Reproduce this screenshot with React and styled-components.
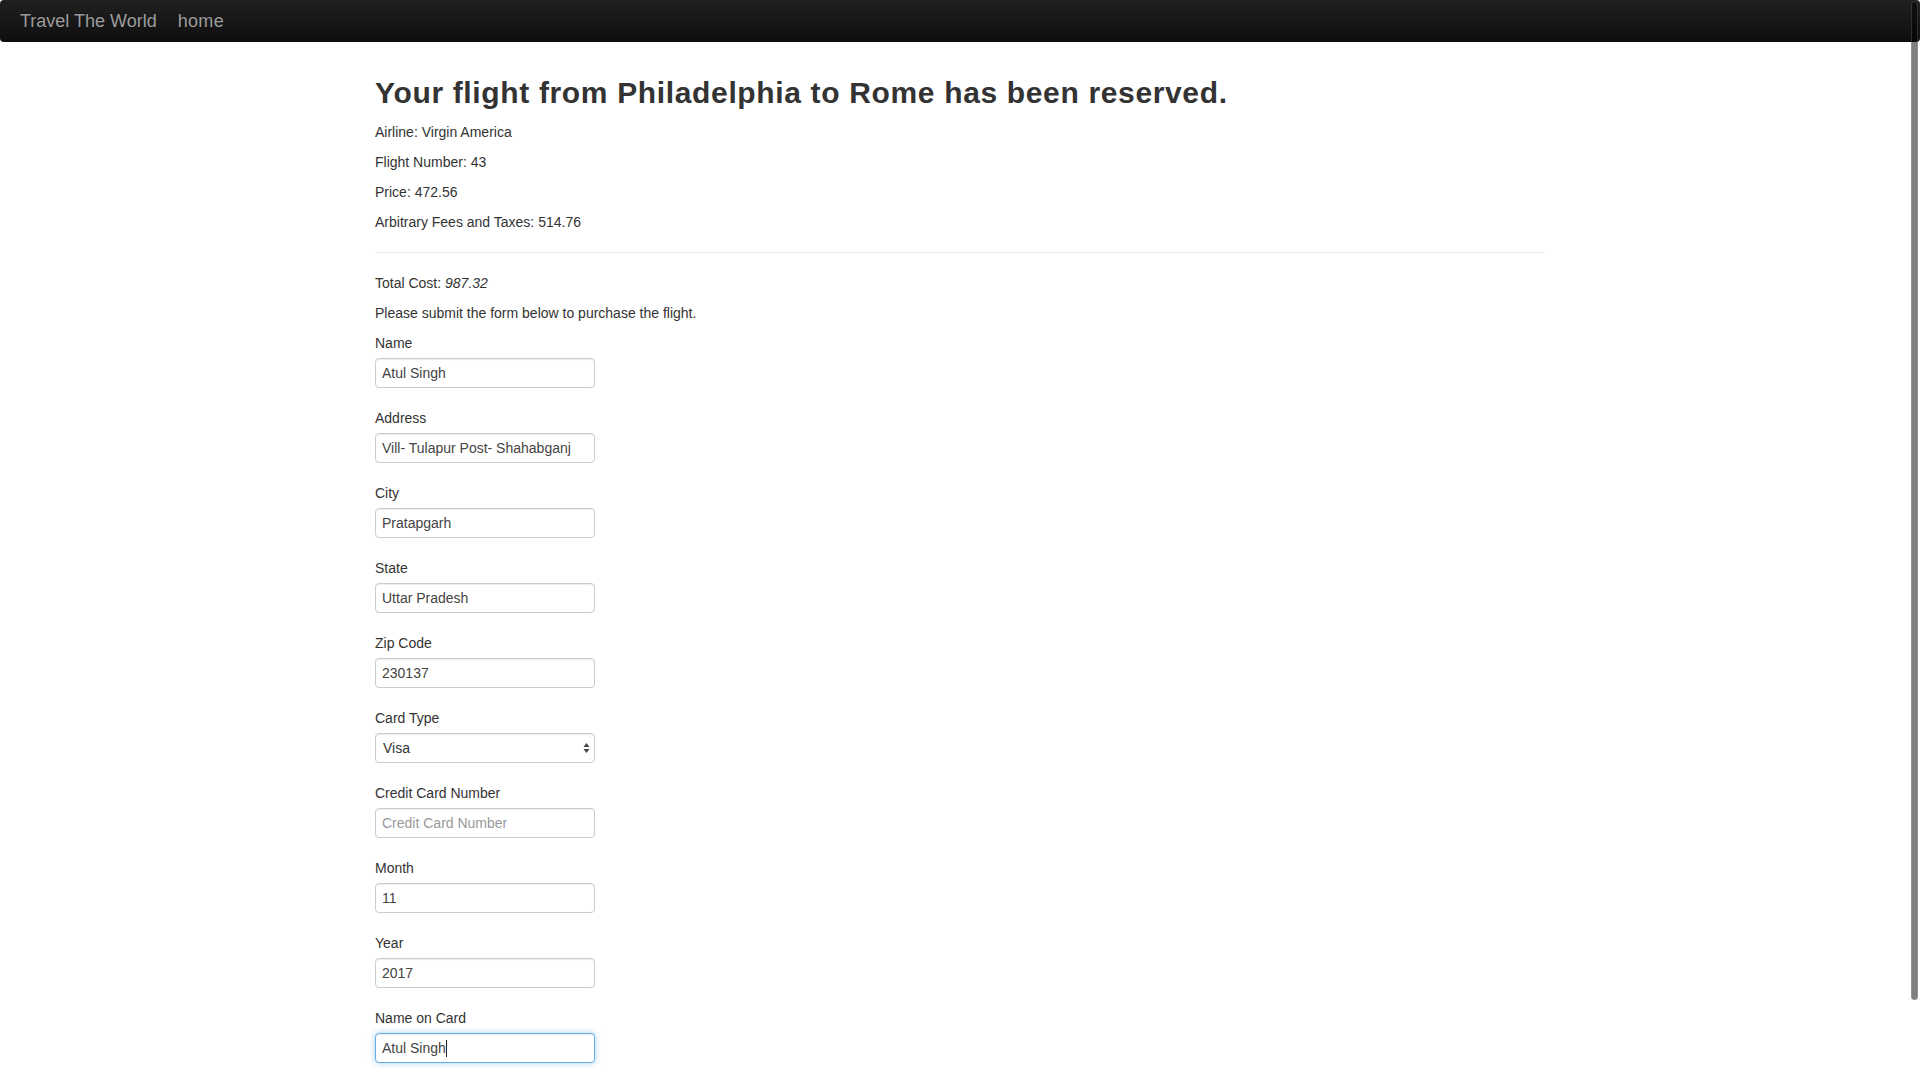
import React from "react";
import styled, { createGlobalStyle, css } from "styled-components";

const GlobalStyle = createGlobalStyle`
    html {
        scrollbar-width: none;
    }
    html::-webkit-scrollbar {
        display: none;
    }
    body {
        margin: 0;
        font-family: "Liberation Sans", Arial, sans-serif;
        font-size: 14px;
        line-height: 20px;
        color: #333;
        background: #fff;
    }
    * {
        box-sizing: border-box;
    }
`;

const Navbar = styled.nav`
    display: flex;
    align-items: center;
    gap: 21px;
    height: 42px;
    padding: 0 20px;
    background: linear-gradient(to bottom, #202020 0, #0e0e0e 100%);
    border-radius: 4px;
`;

const NavLink = styled.a`
    font-size: 18px;
    line-height: 20px;
    color: #9d9d9d;
    text-decoration: none;
    text-shadow: 0 -1px 0 rgba(0, 0, 0, 0.25);
    padding-bottom: 1px;
    letter-spacing: ${(p) => (p.$spaced ? "0.3px" : "0")};
`;

const Container = styled.main`
    width: 1170px;
    margin: 0 auto;
    padding-bottom: 80px;
`;

const Title = styled.h2`
    margin: 34px 0 13px;
    font-size: 30px;
    line-height: 33px;
    font-weight: 700;
    letter-spacing: 0.65px;
    color: #333;
`;

const Detail = styled.p`
    margin: 0 0 10px;
`;

const Divider = styled.hr`
    margin: 20px 0;
    border: 0;
    border-top: 1px solid #eee;
`;

const FieldGroup = styled.div`
    margin-bottom: 20px;
`;

const Label = styled.label`
    display: block;
    margin-bottom: 5px;
    font-weight: 400;
`;

const fieldBase = css`
    display: block;
    width: 220px;
    height: 30px;
    margin: 0;
    padding: 0 6px;
    font-family: "Liberation Sans", Arial, sans-serif;
    font-size: 14px;
    color: #444;
    background: #fff;
    border: 1px solid #ccc;
    border-radius: 4px;
    box-shadow: inset 0 1px 1px rgba(0, 0, 0, 0.075);
    outline: none;
`;

const TextInput = styled.input`
    ${fieldBase}
    &::placeholder {
        color: #999;
    }
    ${(p) =>
        p.$focused &&
        css`
            border-color: #66afe9;
            box-shadow: inset 0 1px 1px rgba(0, 0, 0, 0.075), 0 0 6px rgba(102, 175, 233, 0.6);
        `}
`;

const InputWrap = styled.div`
    position: relative;
    width: 220px;
`;

const CaretLayer = styled.div`
    position: absolute;
    top: 0;
    left: 7px;
    height: 30px;
    display: flex;
    align-items: center;
    pointer-events: none;
    font-size: 14px;
`;

const GhostText = styled.span`
    color: transparent;
    white-space: pre;
`;

const Caret = styled.span`
    width: 1px;
    height: 17px;
    background: #222;
`;

const Select = styled.select`
    ${fieldBase}
    appearance: none;
    -webkit-appearance: none;
    padding-left: 7px;
    color: #333;
`;

const SelectArrows = styled.svg`
    position: absolute;
    top: 9px;
    right: 5px;
    pointer-events: none;
`;

const ScrollThumb = styled.div`
    position: fixed;
    top: 1px;
    right: 2px;
    width: 7px;
    height: 999px;
    border-radius: 4px;
    background: rgba(0, 0, 0, 0.5);
    border: 1px solid rgba(255, 255, 255, 0.15);
`;

const fields = [
    { label: "Name", value: "Atul Singh" },
    { label: "Address", value: "Vill- Tulapur Post- Shahabganj" },
    { label: "City", value: "Pratapgarh" },
    { label: "State", value: "Uttar Pradesh" },
    { label: "Zip Code", value: "230137" },
];

const cardFields = [
    { label: "Credit Card Number", value: "", placeholder: "Credit Card Number" },
    { label: "Month", value: "11" },
    { label: "Year", value: "2017" },
];

const Field = ({ label, value, placeholder }) => (
    <FieldGroup>
        <Label>{label}</Label>
        <TextInput defaultValue={value} placeholder={placeholder} />
    </FieldGroup>
);

const App = () => {
    return (
        <>
            <GlobalStyle />
            <Navbar>
                <NavLink href="#">Travel The World</NavLink>
                <NavLink href="#" $spaced>
                    home
                </NavLink>
            </Navbar>
            <Container>
                <Title>Your flight from Philadelphia to Rome has been reserved.</Title>
                <Detail>Airline: Virgin America</Detail>
                <Detail>Flight Number: 43</Detail>
                <Detail>Price: 472.56</Detail>
                <Detail>Arbitrary Fees and Taxes: 514.76</Detail>
                <Divider />
                <Detail>
                    Total Cost: <em>987.32</em>
                </Detail>
                <Detail>Please submit the form below to purchase the flight.</Detail>
                <form onSubmit={(e) => e.preventDefault()}>
                    {fields.map((f) => (
                        <Field key={f.label} {...f} />
                    ))}
                    <FieldGroup>
                        <Label>Card Type</Label>
                        <InputWrap>
                            <Select defaultValue="Visa">
                                <option>Visa</option>
                                <option>MasterCard</option>
                                <option>American Express</option>
                            </Select>
                            <SelectArrows width="7" height="12" viewBox="0 0 7 12">
                                <path d="M3.5 1 L6.5 5 L0.5 5 Z" fill="#444" />
                                <path d="M3.5 11 L6.5 7 L0.5 7 Z" fill="#444" />
                            </SelectArrows>
                        </InputWrap>
                    </FieldGroup>
                    {cardFields.map((f) => (
                        <Field key={f.label} {...f} />
                    ))}
                    <FieldGroup>
                        <Label>Name on Card</Label>
                        <InputWrap>
                            <TextInput $focused defaultValue="Atul Singh" />
                            <CaretLayer>
                                <GhostText>Atul Singh</GhostText>
                                <Caret />
                            </CaretLayer>
                        </InputWrap>
                    </FieldGroup>
                </form>
            </Container>
            <ScrollThumb />
        </>
    );
};

export default App;
